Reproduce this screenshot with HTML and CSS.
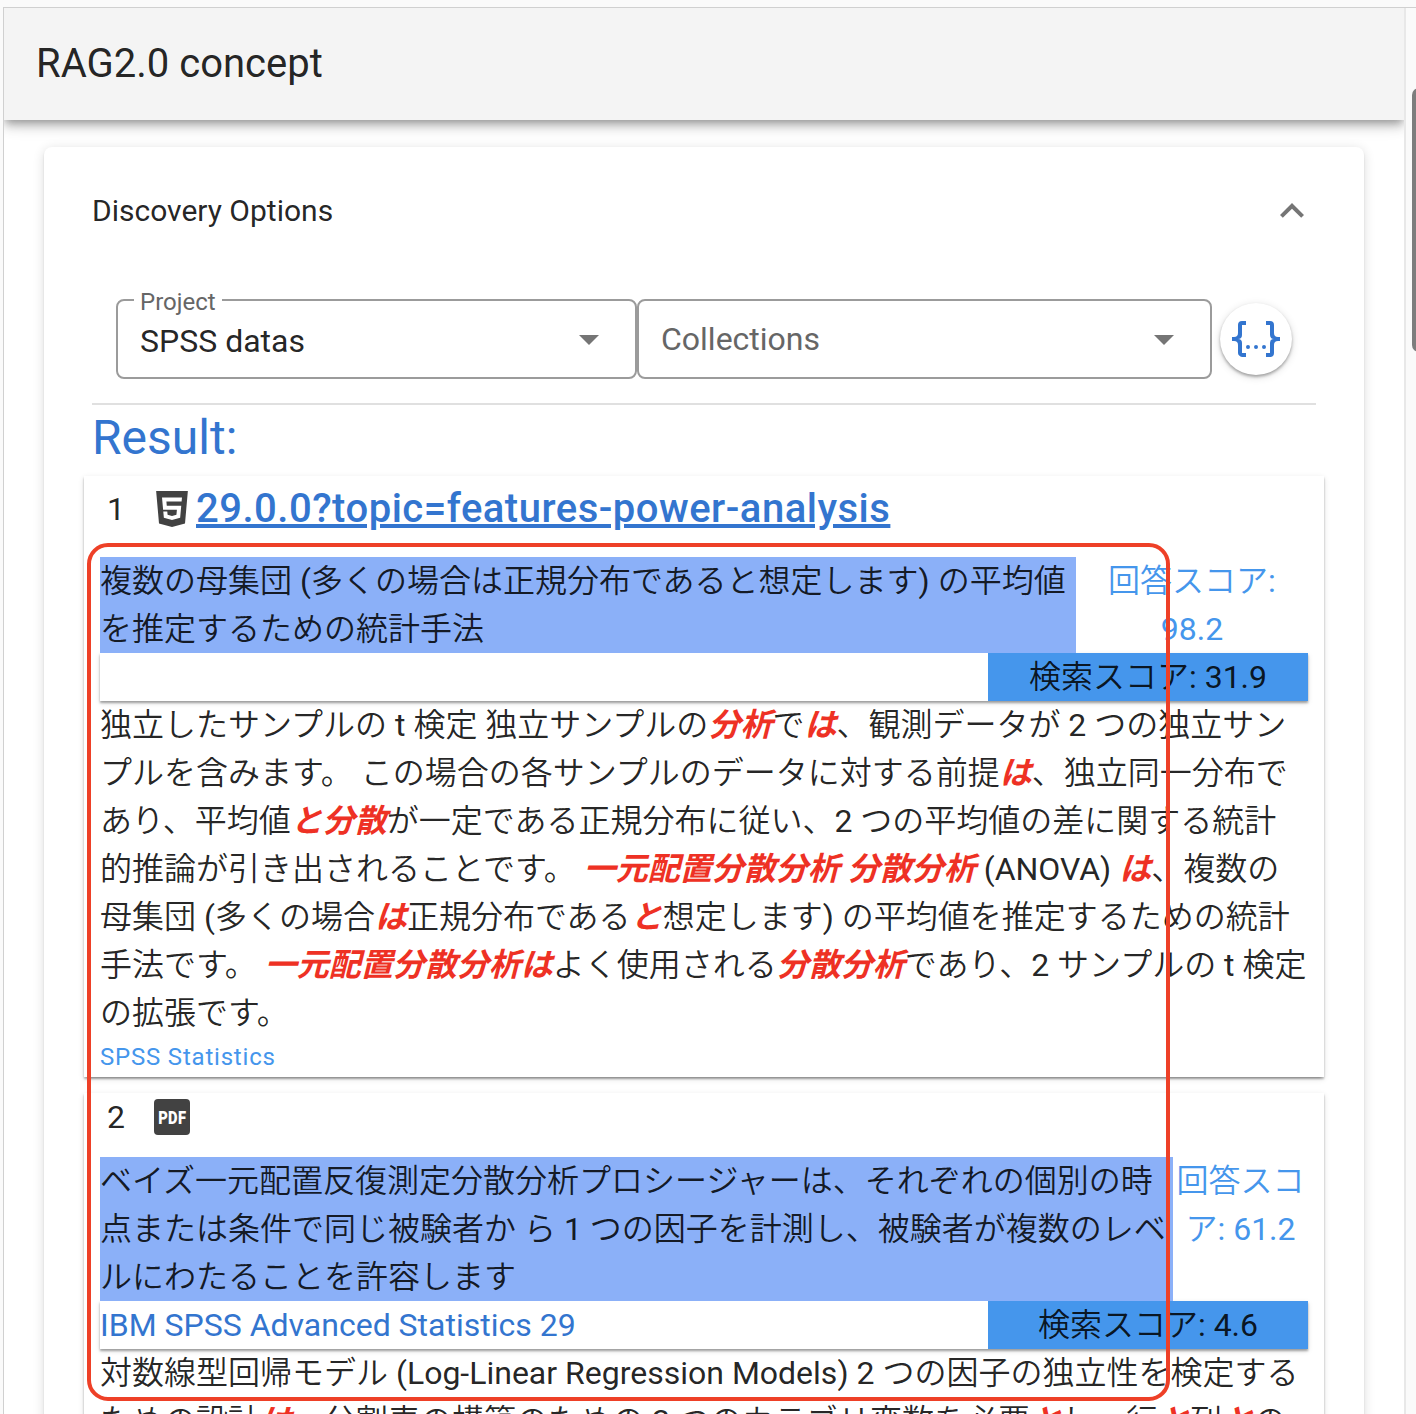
FILE: index.html
```html
<!DOCTYPE html>
<html lang="ja">
<head>
<meta charset="utf-8">
<title>RAG2.0 concept</title>
<link rel="stylesheet" href="styles.css">
</head>
<body>
<div class="window">
  <div class="app">
    <header class="appbar"><h1>RAG2.0 concept</h1></header>
    <main class="panel">
      <div class="panel-head">
        <span class="panel-title">Discovery Options</span>
        <svg class="icon muted" viewBox="0 0 24 24"><path d="M12 8l-6 6 1.41 1.41L12 10.83l4.59 4.58L18 14z"/></svg>
      </div>
      <div class="fields">
        <div class="select project">
          <span class="label">Project</span>
          <span class="value">SPSS datas</span>
          <svg class="icon muted" viewBox="0 0 24 24"><path d="M7 10l5 5 5-5z"/></svg>
        </div>
        <div class="select collections">
          <span class="placeholder">Collections</span>
          <svg class="icon muted" viewBox="0 0 24 24"><path d="M7 10l5 5 5-5z"/></svg>
        </div>
        <button class="fab" aria-label="JSON">
          <svg class="icon" viewBox="0 0 24 24"><path d="M5,3H7V5H5V10A2,2 0 0,1 3,12A2,2 0 0,1 5,14V19H7V21H5C3.93,20.73 3,20.1 3,19V15A2,2 0 0,0 1,13H0V11H1A2,2 0 0,0 3,9V5A2,2 0 0,1 5,3M19,3A2,2 0 0,1 21,5V9A2,2 0 0,0 23,11H24V13H23A2,2 0 0,0 21,15V19A2,2 0 0,1 19,21H17V19H19V14A2,2 0 0,1 21,12A2,2 0 0,1 19,10V5H17V3H19M12,15A1,1 0 0,1 13,16A1,1 0 0,1 12,17A1,1 0 0,1 11,16A1,1 0 0,1 12,15M8,15A1,1 0 0,1 9,16A1,1 0 0,1 8,17A1,1 0 0,1 7,16A1,1 0 0,1 8,15M16,15A1,1 0 0,1 17,16A1,1 0 0,1 16,17A1,1 0 0,1 15,16A1,1 0 0,1 16,15Z"/></svg>
        </button>
      </div>
      <hr class="divider">
      <h2 class="result-title">Result:</h2>

      <article class="card">
        <div class="card-head">
          <span class="rank">1</span>
          <svg class="icon dark" viewBox="0 0 24 24"><path d="M12,17.56L16.07,16.43L16.62,10.33H9.38L9.2,8.3H16.8L17,6.31H7L7.56,12.32H14.45L14.22,14.9L12,15.5L9.78,14.9L9.64,13.24H7.64L7.93,16.43L12,17.56M4.07,3H19.93L18.5,19.2L12,21L5.5,19.2L4.07,3Z"/></svg>
          <a class="doc-link">29.0.0?topic=features-power-analysis</a>
        </div>
        <div class="answer">
          <div class="answer-text first">
            <p class="line">複数の母集団 (多くの場合は正規分布であると想定します) の平均値</p>
            <p class="line">を推定するための統計手法</p>
          </div>
          <div class="answer-score">
            <p class="line">回答スコア:</p>
            <p class="line">98.2</p>
          </div>
        </div>
        <div class="source"><span class="source-title"></span><span class="search-score">検索スコア: 31.9</span></div>
        <div class="passage">
          <p class="line">独立したサンプルの t 検定 独立サンプルの<em>分析</em>で<em>は</em>、観測データが 2 つの独立サン</p>
          <p class="line">プルを含みます。 この場合の各サンプルのデータに対する前提<em>は</em>、独立同一分布で</p>
          <p class="line">あり、平均値<em>と分散</em>が一定である正規分布に従い、2 つの平均値の差に関する統計</p>
          <p class="line">的推論が引き出されることです。 <em>一元配置分散分析</em> <em>分散分析</em> (ANOVA) <em>は</em>、複数の</p>
          <p class="line">母集団 (多くの場合<em>は</em>正規分布である<em>と</em>想定します) の平均値を推定するための統計</p>
          <p class="line">手法です。 <em>一元配置分散分析は</em>よく使用される<em>分散分析</em>であり、2 サンプルの t 検定</p>
          <p class="line">の拡張です。</p>
        </div>
        <div class="collection">SPSS Statistics</div>
      </article>

      <article class="card">
        <div class="card-head pdf">
          <span class="rank">2</span>
          <span class="pdf-badge"><span class="pdf-text">PDF</span></span>
        </div>
        <div class="answer">
          <div class="answer-text second">
            <p class="line">ベイズ一元配置反復測定分散分析プロシージャーは、それぞれの個別の時</p>
            <p class="line">点または条件で同じ被験者か ら 1 つの因子を計測し、被験者が複数のレベ</p>
            <p class="line">ルにわたることを許容します</p>
          </div>
          <div class="answer-score">
            <p class="line">回答スコ</p>
            <p class="line">ア: 61.2</p>
          </div>
        </div>
        <div class="source"><span class="source-title">IBM SPSS Advanced Statistics 29</span><span class="search-score">検索スコア: 4.6</span></div>
        <div class="passage">
          <p class="line">対数線型回帰モデル (Log-Linear Regression Models) 2 つの因子の独立性を検定する</p>
          <p class="line">ための設計<em>は</em>、分割表の構築のための 2 つのカテゴリ変数を必要<em>と</em>し、行<em>と</em>列<em>と</em>の</p>
        </div>
      </article>
    </main>
  </div>
  <div class="scrolltrack"><div class="thumb"></div></div>
</div>
<div class="annotation"></div>
</body>
</html>
```
FILE: styles.css
```css
* { box-sizing: border-box; }
body {
  margin: 0;
  height: 1414px;
  padding: 7px 0 0 3px;
  overflow: hidden;
  background: #fafafa;
  color: rgba(0, 0, 0, .87);
  font-family: Roboto, "Noto Sans CJK JP DemiLight", "Noto Sans CJK JP Light", "Noto Sans CJK JP", sans-serif;
  font-size: 32px;
}
h1, h2, p { margin: 0; font-weight: 400; }
.window {
  display: flex;
  height: 1407px;
  overflow: hidden;
  border: 1px solid #d0d0d0;
  border-width: 1px 0 0 1px;
}
.app { width: 1400px; flex: none; background: #fff; overflow: hidden; }
.scrolltrack { flex: 1; padding: 80px 0 0 6px; border-left: 2px solid #e8e8e8; overflow: hidden; }
.thumb { width: 14px; height: 264px; border-radius: 7px; background: #7d7d7d; }
.appbar {
  display: flex;
  align-items: center;
  height: 112px;
  padding: 0 0 2px 32px;
  background: #f4f4f4;
  box-shadow: 0 4px 8px -2px rgba(0,0,0,.3), 0 8px 10px rgba(0,0,0,.13), 0 2px 20px rgba(0,0,0,.1);
  position: relative;
}
.appbar h1 { font-size: 40px; }
.panel {
  width: 1320px;
  height: 1500px;
  margin: 27px 0 0 40px;
  padding: 0 40px;
  border-radius: 8px;
  background: #fff;
  box-shadow: 0 4px 2px -4px rgba(0,0,0,.2), 0 2px 2px rgba(0,0,0,.12), 0 2px 12px rgba(0,0,0,.14);
  position: relative;
}
.icon { width: 48px; height: 48px; flex: none; fill: currentColor; }
.muted { color: #757575; }
.dark { color: #424242; }
.panel-head {
  display: flex;
  align-items: center;
  justify-content: space-between;
  height: 128px;
  padding: 0 8px;
  font-size: 30px;
}
.panel-title { padding-bottom: 2px; }
.fields { display: flex; align-items: center; height: 128px; padding: 0 24px 0 32px; }
.select {
  display: flex;
  align-items: center;
  justify-content: space-between;
  position: relative;
  height: 80px;
  padding-left: 22px;
  border: 2px solid #9b9b9b;
  border-radius: 8px;
}
.project { width: 521px; padding-right: 22px; }
.collections { width: 575px; padding-right: 22px; }
.label {
  position: absolute;
  left: 16px;
  top: -15px;
  padding: 0 6px;
  background: #fff;
  color: #666;
  font-size: 24px;
  line-height: 32px;
}
.value { padding-top: 3px; }
.placeholder { color: #666; }
.fab {
  display: flex;
  align-items: center;
  justify-content: center;
  width: 72px;
  height: 72px;
  flex: none;
  margin-left: 8px;
  padding: 0;
  border: 0;
  border-radius: 50%;
  background: #fff;
  color: #3375cf;
  box-shadow: 0 2px 3px rgba(0,0,0,.3), 0 2px 8px rgba(0,0,0,.14);
}
.divider { height: 2px; margin: 0 8px; border: 0; background: #e0e0e0; }
.result-title { height: 71px; padding-left: 8px; color: #3375cf; font-size: 48px; line-height: 65px; }
.card {
  margin-bottom: 16px;
  padding: 0 16px;
  background: #fff;
  box-shadow: 0 4px 2px -3px rgba(0,0,0,.2), 0 2px 2px rgba(0,0,0,.28), 0 2px 6px rgba(0,0,0,.12);
}
.card-head { display: flex; align-items: center; height: 65px; margin-bottom: 16px; }
.card-head.pdf { height: 48px; }
.rank { width: 48px; padding-left: 7px; }
.doc-link { color: #3375cf; font-size: 40px; font-weight: 500; text-decoration: underline; letter-spacing: .5px; }
.pdf-badge {
  display: flex;
  align-items: center;
  justify-content: center;
  width: 36px;
  height: 36px;
  margin-left: 6px;
  border-radius: 4px;
  background: #424242;
  color: #fff;
  font-size: 16px;
  font-weight: 900;
}
.pdf-text { transform: scale(.92, 1.1); letter-spacing: .3px; }
.line { height: 48px; line-height: 48px; white-space: nowrap; }
.answer { display: flex; }
.answer-text { background: #8bb0f8; flex: none; }
.first { width: 976px; }
.second { width: 1073px; }
.answer-score { flex: 1; color: #4596ec; text-align: center; }
.source {
  display: flex;
  height: 48px;
  line-height: 48px;
  box-shadow: 0 2px 2px rgba(0,0,0,.3), 0 2px 5px rgba(0,0,0,.15);
}
.source-title { flex: 1; color: #3375cf; }
.search-score { width: 320px; background: #4596ec; text-align: center; }
.passage em { color: #ee3124; font-family: Roboto, "Noto Sans CJK JP", sans-serif; font-weight: 700; }
.collection { height: 40px; color: #4596ec; font-size: 24px; line-height: 40px; letter-spacing: .8px; }
.annotation {
  position: absolute;
  left: 87px;
  top: 543px;
  width: 1083px;
  height: 858px;
  border: 4px solid #ee4027;
  border-radius: 21px;
}
```
